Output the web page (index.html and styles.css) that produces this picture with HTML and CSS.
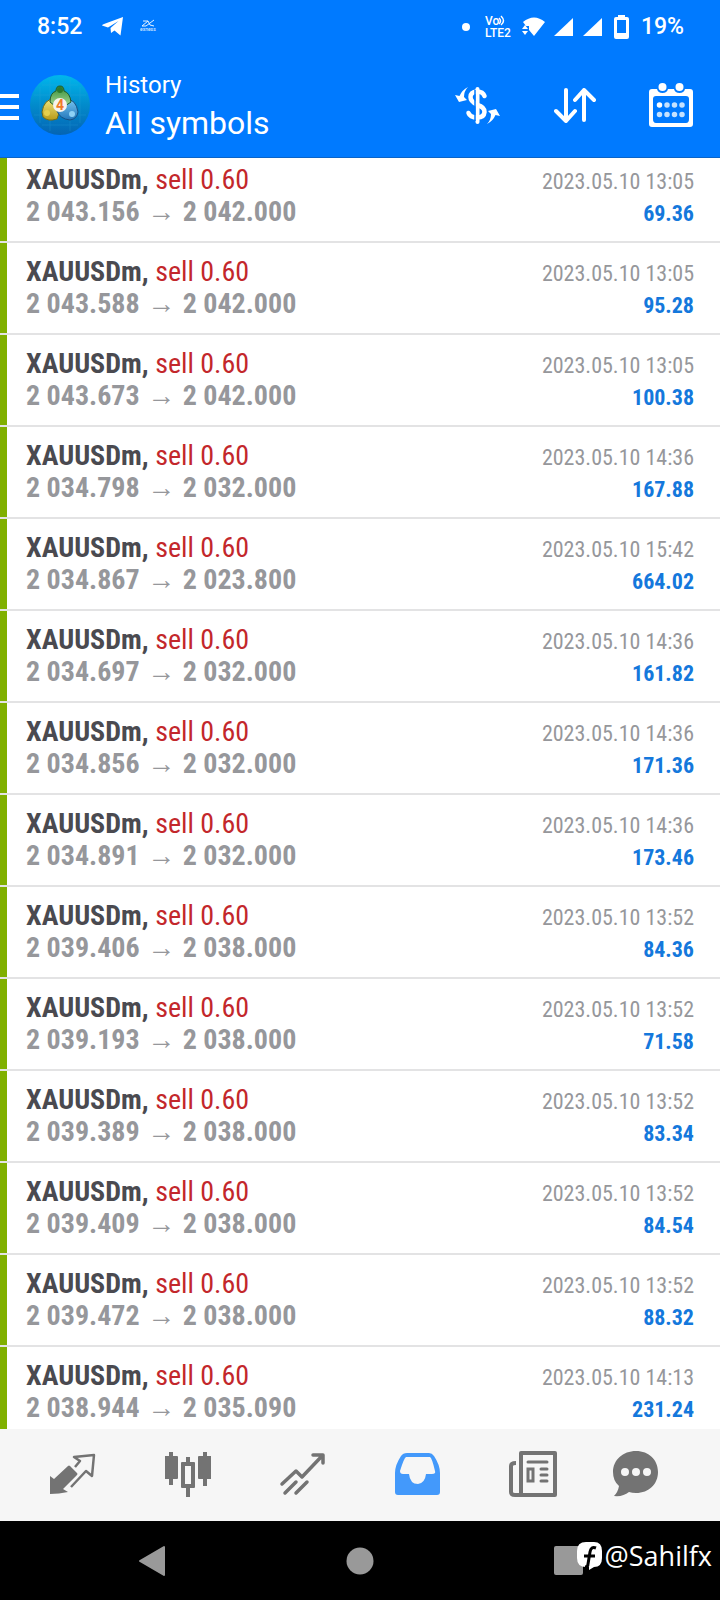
FILE: index.html
```html
<!DOCTYPE html>
<html lang="en">
<head>
<meta charset="utf-8">
<meta name="viewport" content="width=device-width, initial-scale=1">
<title>History</title>
<link rel="stylesheet" href="styles.css">
</head>
<body>
<header class="header">
  <div class="status">
    <span class="clock">8:52</span>
    <svg class="telegram" width="22" height="20" viewBox="0 0 22 20"><path fill="#fff" d="M21 0 18.500 18.500 12.500 13.500 9 16 8.500 11 16.500 4 6 10.500 0 8.500Q0 7.500 2 7Z"/></svg>
    <svg class="express" width="20" height="16" viewBox="0 0 20 16"><path fill="none" stroke="#e6f3ff" stroke-width="1" d="M3 2H8L2 7H6L14 1M8 2 10 6 14 7"/><text class="express-text" x="0" y="12">exness</text></svg>
    <span class="dot"></span>
    <svg class="volte" width="28" height="24" viewBox="0 0 28 24"><text class="volte-text" x="0" y="10">Vo</text><text class="volte-text" x="0" y="22">LTE2</text><path fill="none" stroke="#fff" stroke-width="1.500" d="M14 3Q17 6 14 9M16 1Q21 6 16 10"/></svg>
    <svg class="wifi" width="24" height="20" viewBox="0 0 24 20"><path fill="#fff" d="M1 5Q12-4 23 5L12 19 7 13V9H4ZM0 14H6L3 18ZM0 12 3 8 6 12Z"/></svg>
    <svg class="signal" width="19" height="18" viewBox="0 0 19 18"><path fill="#fff" d="M19 0V18H0Z"/></svg>
    <svg class="signal" width="19" height="18" viewBox="0 0 19 18"><path fill="#fff" d="M19 0V18H0Z"/></svg>
    <svg class="battery" width="15" height="24" viewBox="0 0 15 24"><path fill="#fff" fill-rule="evenodd" d="M4 0H11V2H13Q15 2 15 4V22Q15 24 13 24H2Q0 24 0 22V4Q0 2 2 2H4ZM3 5V18H12V5Z"/></svg>
    <span>19%</span>
  </div>
  <div class="toolbar">
    <button class="icon-button menu" aria-label="Menu"><svg width="19" height="28" viewBox="0 0 19 28"><path fill="#fff" d="M0 1H19V5H0ZM0 12H19V16H0ZM0 23H19V27H0Z"/></svg></button>
    <svg class="avatar" width="60" height="60" viewBox="0 0 60 60">
      <defs>
        <linearGradient id="sky" x1="0" y1="0" x2="0" y2="1"><stop offset="0" stop-color="#00b7ec"/><stop offset=".5" stop-color="#028bcb"/><stop offset="1" stop-color="#0464b4"/></linearGradient>
        <linearGradient id="green" x1="0" y1="0" x2="0" y2="1"><stop offset="0" stop-color="#338b35"/><stop offset="1" stop-color="#a5d893"/></linearGradient>
        <linearGradient id="gold" x1="0" y1="0" x2="0" y2="1"><stop offset="0" stop-color="#efe57e"/><stop offset="1" stop-color="#b79b18"/></linearGradient>
        <linearGradient id="blue" x1="0" y1="0" x2="0" y2="1"><stop offset="0" stop-color="#79c6f1"/><stop offset="1" stop-color="#2377bb"/></linearGradient>
      </defs>
      <circle cx="30" cy="30" r="30" fill="url(#sky)"/>
      <path d="M10 12V48M20 4V56M40 4V56M50 12V48M12 10H48M4 20H56M4 40H56M12 50H48" stroke="#33a9dd" stroke-width="1" opacity=".25"/>
      <path d="M12 37Q14 24 24 24L30 35 27 44Q18 47 13 42Z" fill="url(#gold)" stroke="#6e6c1c"/>
      <path d="M48 37Q46 24 36 24L27 36Q30 44 40 45Q47 44 48 37Z" fill="url(#blue)" stroke="#174f83"/>
      <path d="M20 27Q20 18 26 16Q26 11 30 11Q34 11 34 16Q40 18 41 27L35 31H25Z" fill="url(#green)" stroke="#1f5b2b"/>
      <circle cx="30" cy="15" r="3" fill="#2d7a30"/><circle cx="17" cy="38" r="3" fill="#e5d04c"/><circle cx="42" cy="39" r="3" fill="#8ed1f5"/>
      <circle cx="30" cy="30" r="7" fill="#f7f3ef"/><text class="avatar-text" x="30" y="35">4</text>
    </svg>
    <div class="heading"><h1 class="title">History</h1><p class="subtitle">All symbols</p></div>
    <button class="icon-button" aria-label="Refresh balance"><svg width="46" height="40" viewBox="0 0 46 40"><path fill="none" stroke="#fff" stroke-width="4.500" stroke-linecap="round" d="M29.500 11Q28 6.500 22 6.500Q15.500 7 15.500 12Q15.500 16.500 22 19.500M22.500 20Q29.500 22 29.500 27Q29 32.500 22.500 32.500Q15 32.500 13.500 28"/><path stroke="#fff" stroke-width="4" stroke-linecap="round" d="M22.500 4V37"/><path fill="#fff" d="M13 2Q7 5 4.500 11L0 10 4 17 12 15 9 12Q9 6 13 2ZM32 39Q38 36 40.500 30L45 31 41 24 33 26 36 29Q36 35 32 39Z"/><path stroke="#007aff" stroke-width="1.500" d="M20 5V36"/></svg></button>
    <button class="icon-button" aria-label="Sort"><svg width="42" height="36" viewBox="0 0 42 36"><path fill="none" stroke="#fff" stroke-width="4" stroke-linecap="round" stroke-linejoin="round" d="M12 3V33M2 24 12 34 21 24M30 33V3M21 13 30 3 40 13"/></svg></button>
    <button class="icon-button" aria-label="Choose period"><svg width="44" height="44" viewBox="0 0 44 44"><path fill="#fff" fill-rule="evenodd" d="M3 6H8Q9 10 13.500 10Q18 10 19 6H25Q26 10 30.500 10Q35 10 36 6H41Q44 6 44 9V41Q44 44 41 44H3Q0 44 0 41V9Q0 6 3 6ZM7 13Q4 13 4 16V36Q4 40 7 40H37Q40 40 40 36V16Q40 13 37 13Z"/><circle cx="13.500" cy="4" r="4" fill="#fff"/><circle cx="30.500" cy="4" r="4" fill="#fff"/><path stroke="#c5e2ff" stroke-width="5.500" stroke-linecap="round" d="M18 22h0M25.500 22h0M33 22h0M10.500 31.500h0M18 31.500h0M25.500 31.500h0M33 31.500h0"/><path stroke="#fff" stroke-width="5.500" stroke-linecap="round" d="M10.500 22h0"/></svg></button>
  </div>
</header>
<main class="history">
<ol class="deals">
<li class="deal"><span class="symbol">XAUUSDm, <span class="side">sell 0.60</span></span><time class="time">2023.05.10 13:05</time><span class="prices">2 043.156<span class="arrow">→</span>2 042.000</span><span class="profit">69.36</span></li>
<li class="deal"><span class="symbol">XAUUSDm, <span class="side">sell 0.60</span></span><time class="time">2023.05.10 13:05</time><span class="prices">2 043.588<span class="arrow">→</span>2 042.000</span><span class="profit">95.28</span></li>
<li class="deal"><span class="symbol">XAUUSDm, <span class="side">sell 0.60</span></span><time class="time">2023.05.10 13:05</time><span class="prices">2 043.673<span class="arrow">→</span>2 042.000</span><span class="profit">100.38</span></li>
<li class="deal"><span class="symbol">XAUUSDm, <span class="side">sell 0.60</span></span><time class="time">2023.05.10 14:36</time><span class="prices">2 034.798<span class="arrow">→</span>2 032.000</span><span class="profit">167.88</span></li>
<li class="deal"><span class="symbol">XAUUSDm, <span class="side">sell 0.60</span></span><time class="time">2023.05.10 15:42</time><span class="prices">2 034.867<span class="arrow">→</span>2 023.800</span><span class="profit">664.02</span></li>
<li class="deal"><span class="symbol">XAUUSDm, <span class="side">sell 0.60</span></span><time class="time">2023.05.10 14:36</time><span class="prices">2 034.697<span class="arrow">→</span>2 032.000</span><span class="profit">161.82</span></li>
<li class="deal"><span class="symbol">XAUUSDm, <span class="side">sell 0.60</span></span><time class="time">2023.05.10 14:36</time><span class="prices">2 034.856<span class="arrow">→</span>2 032.000</span><span class="profit">171.36</span></li>
<li class="deal"><span class="symbol">XAUUSDm, <span class="side">sell 0.60</span></span><time class="time">2023.05.10 14:36</time><span class="prices">2 034.891<span class="arrow">→</span>2 032.000</span><span class="profit">173.46</span></li>
<li class="deal"><span class="symbol">XAUUSDm, <span class="side">sell 0.60</span></span><time class="time">2023.05.10 13:52</time><span class="prices">2 039.406<span class="arrow">→</span>2 038.000</span><span class="profit">84.36</span></li>
<li class="deal"><span class="symbol">XAUUSDm, <span class="side">sell 0.60</span></span><time class="time">2023.05.10 13:52</time><span class="prices">2 039.193<span class="arrow">→</span>2 038.000</span><span class="profit">71.58</span></li>
<li class="deal"><span class="symbol">XAUUSDm, <span class="side">sell 0.60</span></span><time class="time">2023.05.10 13:52</time><span class="prices">2 039.389<span class="arrow">→</span>2 038.000</span><span class="profit">83.34</span></li>
<li class="deal"><span class="symbol">XAUUSDm, <span class="side">sell 0.60</span></span><time class="time">2023.05.10 13:52</time><span class="prices">2 039.409<span class="arrow">→</span>2 038.000</span><span class="profit">84.54</span></li>
<li class="deal"><span class="symbol">XAUUSDm, <span class="side">sell 0.60</span></span><time class="time">2023.05.10 13:52</time><span class="prices">2 039.472<span class="arrow">→</span>2 038.000</span><span class="profit">88.32</span></li>
<li class="deal"><span class="symbol">XAUUSDm, <span class="side">sell 0.60</span></span><time class="time">2023.05.10 14:13</time><span class="prices">2 038.944<span class="arrow">→</span>2 035.090</span><span class="profit">231.24</span></li>
</ol>
</main>
<nav class="tabs">
  <button class="tab" aria-label="Quotes"><svg width="48" height="48" viewBox="0 0 48 48"><path fill="#737373" d="M1 25 5 28 19 15Q20 14 21 15L28 22Q29 23 28 24L14 38 19 41Q10 43 1 43Z"/><path fill="none" stroke="#737373" stroke-width="2.500" stroke-linejoin="round" d="M26 16 31 10 25 6 45 4 43 25 37 20 22 36"/></svg></button>
  <button class="tab" aria-label="Charts"><svg width="48" height="48" viewBox="0 0 48 48"><path fill="#737373" d="M5 1H9V5H13Q14 5 14 6V27Q14 28 13 28H9V34H5V28H1V5H5ZM39 1H43V5H47V28H43V35H39V28H35Q34 28 34 27V6Q34 5 35 5H39Z"/><path fill="#737373" fill-rule="evenodd" d="M22 6H26V11H30Q31 11 31 12V36Q31 37 30 37H26V46H22V37H18Q17 37 17 36V12Q17 11 18 11H22ZM21 15V33H27V15Z"/></svg></button>
  <button class="tab" aria-label="Trade"><svg width="48" height="48" viewBox="0 0 48 48"><path fill="none" stroke="#737373" stroke-width="3.500" stroke-linecap="round" stroke-linejoin="round" d="M3 33 17 20 23 26 43 5M34 4H44V12M6 42 17 31M17 42 28 31"/></svg></button>
  <button class="tab" aria-label="History" aria-current="page"><svg width="48" height="48" viewBox="0 0 48 48"><path fill="#4399fb" fill-rule="evenodd" d="M13 2H35Q38 2 40 5Q46 14 46 22V41Q46 44 43 44H4Q1 44 1 41V22Q1 14 7 5Q9 2 13 2ZM12 6Q10 7 6 20Q6 23 9 23H15Q16 33 24 33Q31 32 32 23H38Q42 23 41 20Q38 7 36 6Z"/></svg></button>
  <button class="tab" aria-label="News"><svg width="48" height="48" viewBox="0 0 48 48"><path fill="none" stroke="#737373" stroke-width="4" stroke-linejoin="round" d="M12 2H46V44H12ZM7 12Q2 12 2 15V41Q2 44 6 44H13"/><path fill="none" stroke="#737373" stroke-width="3" stroke-linecap="round" d="M19 11H38M32 18H38M32 24H38M32 30H38M19 18H24V30H19Z"/></svg></button>
  <button class="tab" aria-label="Messages"><svg width="48" height="48" viewBox="0 0 48 48"><path fill="#737373" fill-rule="evenodd" d="M24 0C37 0 46 9 46 21S37 42 24 42Q20 42 17 41Q11 46 2 45Q6 41 7 35Q1 30 1 21C1 9 11 0 24 0ZM9 21a4 4 0 1 0 8 0a4 4 0 1 0-8 0ZM20 21a4 4 0 1 0 8 0a4 4 0 1 0-8 0ZM31 21a4 4 0 1 0 8 0a4 4 0 1 0-8 0Z"/></svg></button>
</nav>
<footer class="system">
  <button class="system-button" aria-label="Back"><svg width="28" height="32" viewBox="0 0 28 32"><path fill="#999" stroke="#999" stroke-width="2" stroke-linejoin="round" d="M26 2V30L2 16Z"/></svg></button>
  <button class="system-button" aria-label="Home"><svg width="28" height="28" viewBox="0 0 28 28"><circle cx="14" cy="14" r="13.500" fill="#999"/></svg></button>
  <button class="system-button" aria-label="Recent apps"><svg width="29" height="29" viewBox="0 0 29 29"><rect width="29" height="29" rx="2" fill="#999"/></svg></button>
  <div class="watermark"><svg width="26" height="29" viewBox="0 0 26 29"><path fill="#fff" d="M9 0H17Q25 0 25 9V16Q25 25 17 25L12 28V25H9Q0 25 0 16V9Q0 0 9 0Z"/><path fill="none" stroke="#000" stroke-width="3" d="M19 6Q14 4 13 10L11 22Q11 25 8 25M7 14H18"/></svg><span>@Sahilfx</span></div>
</footer>
</body>
</html>
```
FILE: styles.css
```css
* { box-sizing: border-box; }
body {
  margin: 0;
  height: 100vh;
  display: flex;
  flex-direction: column;
  background: #fff;
  font-family: Roboto, "Liberation Sans", sans-serif;
}
button {
  padding: 0;
  border: 0;
  background: none;
  display: flex;
  align-items: center;
  justify-content: center;
}
svg { display: block; flex: none; }

.header {
  padding-bottom: 2px;
  background: #007aff;
  color: #fff;
  border-bottom: 1px solid #0a64c8;
}
.status {
  display: flex;
  align-items: center;
  height: 54px;
  padding: 0 36px 0 37px;
  font-size: 23px;
  font-weight: 500;
  line-height: 54px;
}
.telegram { margin-left: 20px; }
.express { margin-left: 16px; }
.express-text { font: 5px Roboto, sans-serif; fill: #e6f3ff; }
.dot {
  width: 8px;
  height: 8px;
  margin-left: auto;
  border-radius: 50%;
  background: #fff;
}
.volte { margin-left: 15px; }
.volte-text { font: 500 12px Roboto, sans-serif; fill: #fff; }
.wifi { margin-left: 9px; }
.signal { margin-left: 8px; }
.signal + .signal { margin-left: 10px; }
.battery { margin: 0 12px; }

.toolbar {
  display: flex;
  align-items: center;
  height: 101px;
  padding-right: 27px;
}
.menu { margin-right: 11px; padding-top: 4px; }
.avatar-text { font: 700 14px Roboto, sans-serif; fill: #f07a28; text-anchor: middle; }
.heading { flex: 1; margin-left: 15px; }
.title, .subtitle { margin: 0; font-weight: 400; }
.title { font-size: 24px; line-height: 36px; }
.subtitle { font-size: 32px; line-height: 40px; }
.icon-button + .icon-button { margin-left: 53px; }

.history { flex: 1; min-height: 0; overflow: hidden; }
.deals { list-style: none; margin: -7px 0 0; padding: 0; }
.deal {
  display: grid;
  grid-template-columns: 1fr auto;
  grid-template-rows: 32px 32px;
  align-items: baseline;
  padding: 13px 26px;
  border-bottom: 2px solid #e3e3e4;
  box-shadow: inset 7px 0 #80b000;
  font-family: "Roboto Condensed", Roboto, sans-serif;
  font-size: 28px;
  line-height: 32px;
}
.symbol, .prices, .profit { font-weight: 700; }
.symbol { color: #4a4a50; }
.side { color: #c3272b; font-weight: 400; }
.prices, .time { color: #96979b; }
.time, .profit { font-size: 22px; text-align: right; }
.profit { color: #1478dc; }
.arrow {
  display: inline-block;
  width: 43px;
  text-align: center;
  font-family: "Liberation Sans", sans-serif;
  line-height: 24px;
}

.tabs {
  display: grid;
  grid-template-columns: repeat(5, 115fr) 92fr;
  height: 92px;
  padding: 0 38px 0 15px;
  background: #f6f6f6;
}
.system {
  position: relative;
  display: grid;
  grid-template-columns: repeat(3, 1fr);
  height: 79px;
  padding: 0 48px;
  background: #000;
}
.watermark {
  position: absolute;
  right: 8px;
  top: 17px;
  display: flex;
  align-items: center;
  gap: 2px;
  color: #fff;
  font-family: "Open Sans", sans-serif;
  font-size: 27px;
  line-height: 36px;
}
```
